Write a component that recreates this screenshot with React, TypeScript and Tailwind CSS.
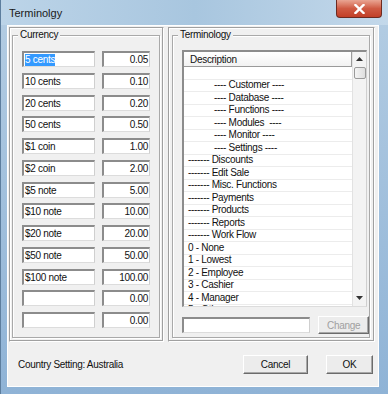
import React from "react";

const currency: [string, string][] = [
  ["5 cents", "0.05"],
  ["10 cents", "0.10"],
  ["20 cents", "0.20"],
  ["50 cents", "0.50"],
  ["$1 coin", "1.00"],
  ["$2 coin", "2.00"],
  ["$5 note", "5.00"],
  ["$10 note", "10.00"],
  ["$20 note", "20.00"],
  ["$50 note", "50.00"],
  ["$100 note", "100.00"],
  ["", "0.00"],
  ["", "0.00"],
];

// indent: true = section heading rows
const terms: { text: string; indent?: boolean }[] = [
  { text: "" },
  { text: "---- Customer ----", indent: true },
  { text: "---- Database ----", indent: true },
  { text: "---- Functions ----", indent: true },
  { text: "---- Modules  ----", indent: true },
  { text: "---- Monitor ----", indent: true },
  { text: "---- Settings ----", indent: true },
  { text: "------- Discounts" },
  { text: "------- Edit Sale" },
  { text: "------- Misc. Functions" },
  { text: "------- Payments" },
  { text: "------- Products" },
  { text: "------- Reports" },
  { text: "------- Work Flow" },
  { text: "0 - None" },
  { text: "1 - Lowest" },
  { text: "2 - Employee" },
  { text: "3 - Cashier" },
  { text: "4 - Manager" },
  { text: "5 - Other" },
];

const field =
  "h-[16px] bg-white border-t-2 border-l-2 border-b border-r border-t-[#8c8c8c] border-l-[#8c8c8c] border-b-[#dcdcdc] border-r-[#cfcfcf] flex items-center whitespace-nowrap overflow-hidden";

const button =
  "flex items-center justify-center border border-t-[#ffffff] border-l-[#ffffff] border-b-[#6b6b6b] border-r-[#6b6b6b] shadow-[inset_-1px_-1px_0_#a8a8a8] bg-[#ececec] text-[#111]";

function GroupBox({
  label,
  className,
  children,
}: {
  label: string;
  className: string;
  children: React.ReactNode;
}) {
  return (
    <div
      className={`relative border border-[#a9a9a9] shadow-[1px_1px_0_#ffffff,inset_1px_1px_0_#ffffff] ${className}`}
    >
      <span className="absolute -top-[7px] left-[5px] bg-[#f0f0f0] px-[2px] leading-[12px] text-[#111]">
        {label}
      </span>
      {children}
    </div>
  );
}

export default function App() {
  return (
    <div className="w-[388px] h-[394px] flex flex-col bg-gradient-to-b from-[#b4cde3] to-[#8fb3d6] border-l border-[#5d7e9e] font-['Liberation_Sans',Arial,sans-serif] text-[10px] tracking-[-0.3px] overflow-hidden">
      {/* title bar */}
      <div className="h-[25px] flex items-start bg-gradient-to-r from-[#bcd4e8] via-[#a8c6df] to-[#c3d8ea]">
        <span className="mt-[7px] ml-[8px] text-[11px] tracking-normal text-[#1a1a1a] leading-[13px]">
          Terminolgy
        </span>
        <div className="ml-auto mr-[6px] w-[46px] h-[18px] rounded-b-[4px] border border-t-0 border-[#6d2a20] bg-gradient-to-b from-[#e9a593] via-[#cf5a43] to-[#c23f27] flex items-center justify-center">
          <svg width="11" height="10" viewBox="0 0 11 10">
            <path d="M1.5 1 L9.5 9 M9.5 1 L1.5 9" stroke="#ffffff" strokeWidth="2.4" strokeLinecap="square" />
          </svg>
        </div>
      </div>

      {/* client area */}
      <div className="ml-[6px] w-[372px] h-[362px] bg-[#f0f0f0] border border-[#ffffff] flex flex-col">
        <div className="flex gap-[4px] pt-[1px] pl-[1px]">
          {/* left panel */}
          <div className="w-[155px] h-[315px] border border-t-[#a0a0a0] border-l-[#a0a0a0] border-b-[#ffffff] border-r-[#ffffff] shadow-[inset_-1px_-1px_0_#a0a0a0,inset_1px_1px_0_#ffffff] pt-[7px] pl-[2px]">
            <GroupBox label="Currency" className="w-[148px] h-[303px]">
              <div className="flex flex-col gap-[5.75px] pt-[15px] pl-[9px]">
                {currency.map(([name, value], i) => (
                  <div key={i} className="flex gap-[7px]">
                    <div className={`${field} w-[73px] pl-[1px]`}>
                      {i === 0 ? (
                        <span className="bg-[#3399ff] text-white leading-[12px]">{name}</span>
                      ) : (
                        <span className="text-[#111]">{name}</span>
                      )}
                    </div>
                    <div className={`${field} w-[48px] justify-end pr-[1px] text-[#111]`}>
                      {value}
                    </div>
                  </div>
                ))}
              </div>
            </GroupBox>
          </div>

          {/* right panel */}
          <div className="w-[207px] h-[315px] border border-t-[#a0a0a0] border-l-[#a0a0a0] border-b-[#ffffff] border-r-[#ffffff] shadow-[inset_-1px_-1px_0_#a0a0a0,inset_1px_1px_0_#ffffff] pt-[7px] pl-[3px]">
            <GroupBox label="Terminology" className="w-[198px] h-[303px]">
              <div className="flex flex-col pt-[14px] pl-[9px]">
                {/* list box */}
                <div className="w-[185px] h-[257px] bg-white border-t-2 border-l-2 border-b border-r border-t-[#8c8c8c] border-l-[#8c8c8c] border-b-[#dcdcdc] border-r-[#cfcfcf] flex overflow-hidden">
                  <div className="flex-1 flex flex-col overflow-hidden">
                    <div className="h-[15px] shrink-0 flex items-center pl-[6px] border-b border-r border-[#9a9a9a] bg-gradient-to-b from-[#ffffff] to-[#f2f2f2] text-[#111]">
                      Description
                    </div>
                    {terms.map((t, i) => (
                      <div
                        key={i}
                        className={`h-[12.5px] shrink-0 flex items-center border-b border-[#ececec] whitespace-pre text-[#111] leading-[12px] ${
                          t.indent ? "pl-[30px]" : "pl-[4px]"
                        }`}
                      >
                        {t.text}
                      </div>
                    ))}
                  </div>
                  {/* scrollbar */}
                  <div className="w-[14px] shrink-0 bg-[#f3f3f3] border-l border-[#e2e2e2] flex flex-col items-center">
                    <div className="h-[14px] w-full flex items-center justify-center">
                      <svg width="7" height="4" viewBox="0 0 7 4">
                        <path d="M0 4 L3.5 0 L7 4 Z" fill="#333" />
                      </svg>
                    </div>
                    <div className="w-[12px] h-[12px] mt-[1px] border border-[#9a9a9a] rounded-[2px] bg-gradient-to-r from-[#f4f4f4] to-[#dedede]" />
                    <div className="flex-1" />
                    <div className="h-[16px] w-full flex items-center justify-center">
                      <svg width="7" height="4" viewBox="0 0 7 4">
                        <path d="M0 0 L3.5 4 L7 0 Z" fill="#333" />
                      </svg>
                    </div>
                  </div>
                </div>
                {/* edit + change */}
                <div className="flex items-center gap-[8px] mt-[9px]">
                  <div className={`${field} w-[129px]`} />
                  <div className={`${button} w-[51px] h-[18px] text-[#a0a0a0]`}>Change</div>
                </div>
              </div>
            </GroupBox>
          </div>
        </div>

        {/* footer */}
        <div className="flex items-center flex-1 pl-[10px] pr-[5px]">
          <span className="text-[#111]">Country Setting: Australia</span>
          <div className={`${button} ml-auto w-[65px] h-[19px]`}>Cancel</div>
          <div className={`${button} ml-[18px] w-[47px] h-[19px]`}>OK</div>
        </div>
      </div>
    </div>
  );
}
